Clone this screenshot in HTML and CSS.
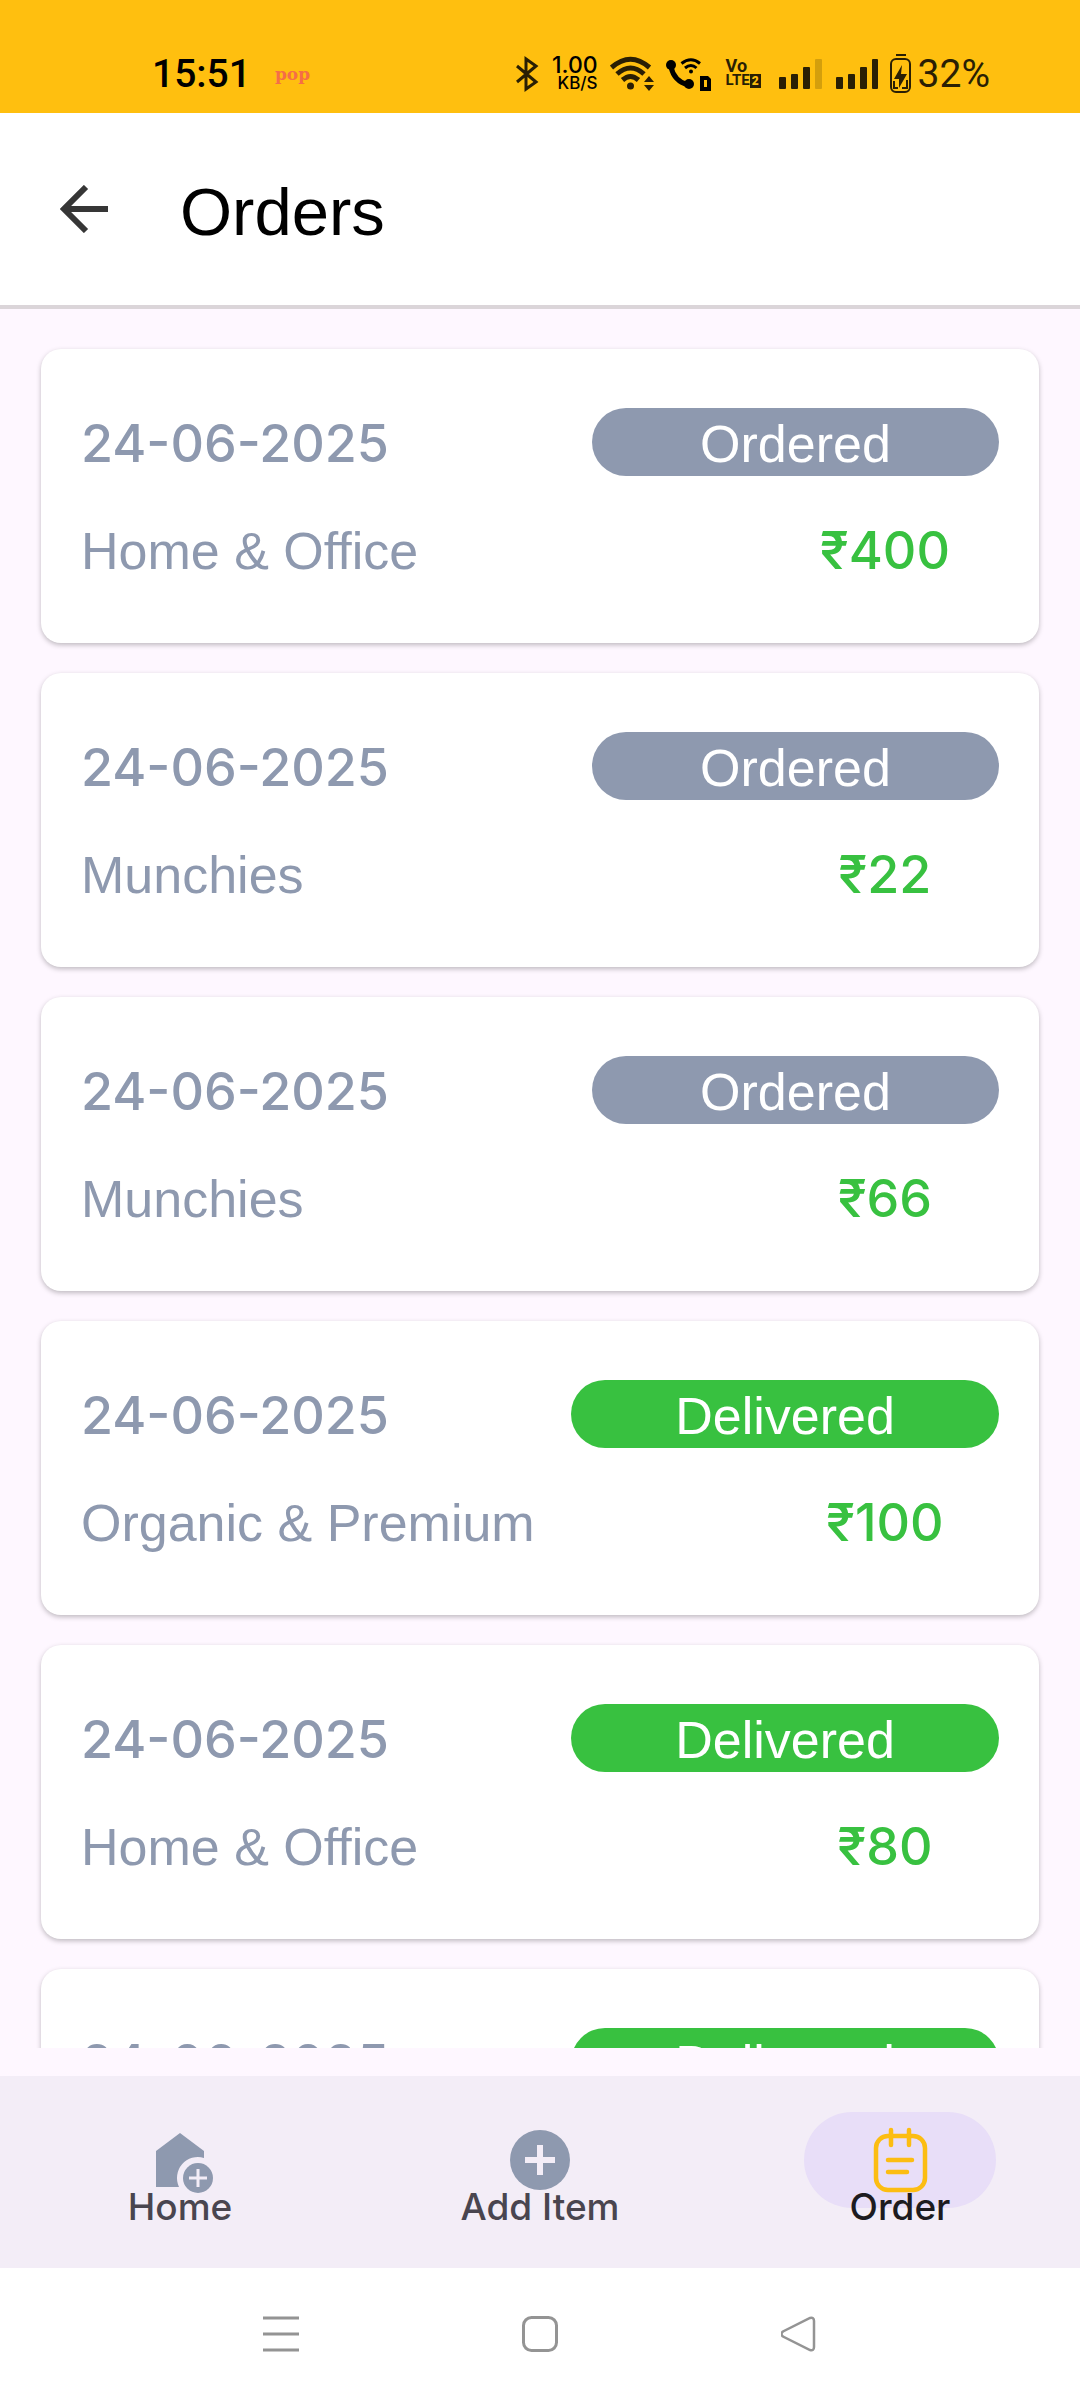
FILE: index.html
```
<!DOCTYPE html>
<html lang="en">
<head>
<meta charset="utf-8">
<meta name="viewport" content="width=device-width, initial-scale=1">
<title>Orders</title>
<link rel="stylesheet" href="styles.css">
</head>
<body>
<div class="status-bar">
  <span class="clock">15:51</span>
  <span class="pop">pop</span>
  <div class="indicators">
    <svg width="24" height="38" viewBox="0 0 24 38" fill="none" stroke="#2a1f04" stroke-width="3"><path d="M1 11L20 27L10 34V4L20 11L1 27"/></svg>
    <div class="speed"><span class="rate">1.00</span><span class="unit">KB/S</span></div>
    <svg width="44" height="38" viewBox="0 0 44 38" fill="none" stroke="#2a1f04" stroke-width="5"><path d="M1.500 12.500Q20.500-4 39.500 12.500M7 19Q20.500 7 34 19M12.500 25Q20.500 18 28.500 25"/><circle cx="20.500" cy="31" r="3.500" fill="#2a1f04" stroke="none"/><path d="M34 27L39 21L44 27ZM34 30H44L39 36Z" fill="#2a1f04" stroke="none"/></svg>
    <svg width="45" height="38" viewBox="0 0 45 38" fill="none" stroke="#000"><path d="M5 12Q8 26 22 30" stroke-width="5"/><circle cx="5" cy="10" r="5" fill="#000" stroke="none"/><circle cx="23" cy="29" r="5" fill="#000" stroke="none"/><path d="M15.500 8.500Q25 1 34 8.500M19 13Q25 8 30.500 13" stroke-width="3"/><circle cx="25" cy="16.500" r="2" fill="#000" stroke="none"/><path d="M36 21H42L45 24V36H34V21Z" fill="#000" stroke="none"/><path d="M39.500 25V32" stroke="#ffbf0f" stroke-width="3"/></svg>
    <div class="volte"><span class="vo">Vo</span><span>LTE<b>2</b></span></div>
    <svg width="45" height="38" viewBox="0 0 45 38" fill="#2a1f04"><rect y="22" width="7" height="12" rx="1"/><rect x="12" y="19" width="7" height="15" rx="1"/><rect x="24" y="12" width="7" height="22" rx="1"/><rect x="36" y="4" width="7" height="30" rx="1" fill="#d49f0c"/></svg>
    <svg width="42" height="38" viewBox="0 0 42 38" fill="#2a1f04"><rect y="22" width="7" height="12" rx="1"/><rect x="12" y="19" width="7" height="15" rx="1"/><rect x="24" y="12" width="7" height="22" rx="1"/><rect x="36" y="4" width="6" height="30" rx="1"/></svg>
    <div class="battery">
      <svg width="22" height="40" viewBox="0 0 22 40" fill="none" stroke="#2a1f04" stroke-width="2"><path d="M6 1H16"/><rect x="1" y="5" width="19" height="33" rx="5"/><path d="M12 11L4 25H9V34L17 20H11Z" fill="#2a1f04" stroke="none"/><path d="M4 27V34H8M12 34H17V26" stroke-width="2"/></svg>
      <span>32%</span>
    </div>
  </div>
</div>

<header class="app-bar">
  <button class="back" type="button" aria-label="Back"><svg width="48" height="48" viewBox="0 0 48 48" fill="none" stroke="#363636" stroke-width="6"><path d="M26 2L4 24L26 46M4 24H48"/></svg></button>
  <h1>Orders</h1>
</header>

<main class="orders">
  <article class="order"><div class="row"><time>24-06-2025</time><span class="badge">Ordered</span></div><div class="row"><span>Home &amp; Office</span><strong class="price">₹400</strong></div></article>
  <article class="order"><div class="row"><time>24-06-2025</time><span class="badge">Ordered</span></div><div class="row"><span>Munchies</span><strong class="price">₹22</strong></div></article>
  <article class="order"><div class="row"><time>24-06-2025</time><span class="badge">Ordered</span></div><div class="row"><span>Munchies</span><strong class="price">₹66</strong></div></article>
  <article class="order"><div class="row"><time>24-06-2025</time><span class="badge delivered">Delivered</span></div><div class="row"><span>Organic &amp; Premium</span><strong class="price">₹100</strong></div></article>
  <article class="order"><div class="row"><time>24-06-2025</time><span class="badge delivered">Delivered</span></div><div class="row"><span>Home &amp; Office</span><strong class="price">₹80</strong></div></article>
  <article class="order"><div class="row"><time>24-06-2025</time><span class="badge delivered">Delivered</span></div></article>
</main>

<nav class="tabs">
  <a class="tab" href="#home"><span class="pill"><svg width="72" height="72" viewBox="0 0 72 72"><path fill="#8e99af" d="M12 27L36 9L60 27V33.900A21 21 0 0 0 35 63H12Z"/><circle cx="54" cy="54" r="15" fill="#8e99af"/><path d="M45 54H63M54 45V63" stroke="#f3edf7" stroke-width="3"/></svg></span><span class="label">Home</span></a>
  <a class="tab" href="#add"><span class="pill"><svg width="72" height="72" viewBox="0 0 72 72"><circle cx="36" cy="36" r="30" fill="#8e99af"/><path d="M21 36H51M36 21V51" stroke="#f3edf7" stroke-width="6"/></svg></span><span class="label">Add Item</span></a>
  <a class="tab active" href="#order" aria-current="page"><span class="pill"><svg width="72" height="72" viewBox="0 0 72 72" fill="none" stroke="#fcbd12" stroke-width="4.500" stroke-linecap="round"><rect x="12" y="12" width="49" height="54" rx="12"/><path d="M27 6V21M45 6V21M24 36H48M24 48H43"/></svg></span><span class="label">Order</span></a>
</nav>

<div class="system-bar">
  <button type="button" aria-label="Recent apps"><svg width="36" height="36" viewBox="0 0 36 36" stroke="#949494" stroke-width="3"><path d="M0 2H36M0 18H36M0 34H36"/></svg></button>
  <button type="button" aria-label="Home screen"><svg width="36" height="36" viewBox="0 0 36 36" fill="none" stroke="#949494" stroke-width="3"><rect x="1.500" y="1.500" width="33" height="33" rx="8"/></svg></button>
  <button type="button" aria-label="Back"><svg width="36" height="36" viewBox="0 0 36 36" fill="none" stroke="#949494" stroke-width="2.500"><path d="M2 15.500Q-1 18 2 20.500L29 34Q33 35 33 31V5Q33 1 29 2Z"/></svg></button>
</div>
</body>
</html>
```
FILE: styles.css
```
* { box-sizing: border-box; }

body {
  margin: 0;
  height: 100vh;
  display: flex;
  flex-direction: column;
  background: #fef7ff;
  font-family: "Liberation Sans", Arial, sans-serif;
}

button {
  padding: 0;
  border: 0;
  background: none;
}

svg { display: block; }

/* Status bar */
.status-bar {
  display: flex;
  align-items: center;
  height: 113px;
  padding: 34px 90px 0 152px;
  background: #ffbf0f;
  font-family: Roboto, sans-serif;
}

.clock {
  font-size: 39px;
  font-weight: 500;
  line-height: 40px;
}

.pop {
  margin-left: 24px;
  color: #f56e47;
  font: bold 17px/40px "DejaVu Serif", serif;
}

.indicators {
  display: flex;
  align-items: center;
  gap: 12px;
  height: 40px;
  margin-left: auto;
}

.speed {
  display: flex;
  flex-direction: column;
  align-items: flex-end;
  font-family: Inter, sans-serif;
  font-weight: 500;
}

.rate { font-size: 23px; line-height: 20px; }
.unit { font-size: 17px; line-height: 17px; }

.volte {
  display: flex;
  flex-direction: column;
  width: 44px;
  padding-left: 3px;
  color: #2a1f04;
  font-size: 15px;
  font-weight: 700;
  line-height: 15px;
}

.volte .vo { font-size: 18px; }

.volte b {
  padding: 0 2px;
  background: #2a1f04;
  color: #ffbf0f;
  font-size: 12px;
}

.battery {
  display: flex;
  align-items: center;
  gap: 6px;
  color: #2a1f04;
  font-size: 39px;
  line-height: 40px;
}

/* App bar */
.app-bar {
  display: flex;
  align-items: center;
  gap: 72px;
  height: 196px;
  padding: 0 60px;
  border-bottom: 4px solid #dbd5d9;
  background: #fff;
}

.app-bar h1 {
  margin: 0;
  padding-top: 4px;
  font-size: 67px;
  font-weight: 400;
}

/* Order list */
.orders {
  flex: 1;
  min-height: 0;
  display: flex;
  flex-direction: column;
  gap: 30px;
  margin-bottom: 28px;
  padding: 40px 41px 0;
  overflow: hidden;
}

.order {
  flex: none;
  display: flex;
  flex-direction: column;
  gap: 41px;
  padding: 59px 40px 58px;
  border-radius: 20px;
  background: #fff;
  box-shadow: 0 2px 5px rgba(0, 0, 0, 0.25);
  color: #8e99af;
  font-size: 52px;
}

.row {
  display: flex;
  justify-content: space-between;
  align-items: baseline;
  height: 68px;
  line-height: 68px;
}

.row time,
.price {
  font-family: Inter, sans-serif;
  font-weight: 500;
}

.badge {
  width: 407px;
  height: 68px;
  padding-top: 4px;
  border-radius: 34px;
  background: #8e99af;
  color: #fff;
  line-height: 64px;
  text-align: center;
}

.badge.delivered {
  width: 428px;
  background: #38c140;
}

.price {
  width: 228px;
  color: #38c140;
  text-align: center;
}

/* Bottom navigation */
.tabs {
  display: grid;
  grid-template-columns: repeat(3, 1fr);
  height: 192px;
  padding-top: 36px;
  background: #f3edf7;
}

.tab {
  display: flex;
  flex-direction: column;
  align-items: center;
  color: #49454f;
  text-decoration: none;
}

.pill {
  display: grid;
  place-items: center;
  width: 192px;
  height: 96px;
  border-radius: 48px;
}

.label {
  z-index: 1;
  margin-top: -23px;
  font: 500 37px/44px Inter, sans-serif;
}

.active { color: #1d1b20; }
.active .pill { background: #e8def8; }

/* System navigation */
.system-bar {
  display: grid;
  grid-template-columns: repeat(3, 1fr);
  place-items: center;
  height: 132px;
  padding: 0 14%;
  background: #fff;
}
```
